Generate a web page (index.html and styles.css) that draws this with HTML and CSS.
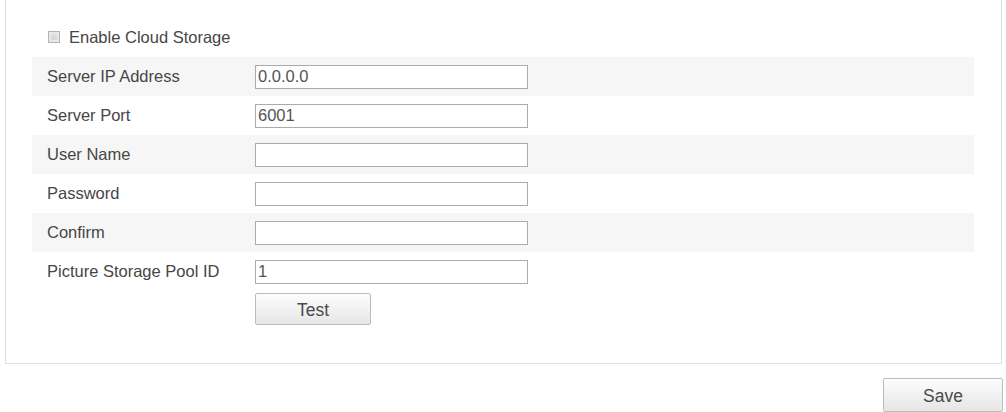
FILE: index.html
```html
<!DOCTYPE html>
<html lang="en">
<head>
    <meta charset="UTF-8">
    <title>Cloud Storage</title>
    <link rel="stylesheet" href="styles.css">
</head>
<body>
    <div class="panel">
        <label class="enable">
            <input type="checkbox" class="check">
            <span>Enable Cloud Storage</span>
        </label>

        <div class="form">
            <div class="row">
                <span class="label">Server IP Address</span>
                <input type="text" class="field" value="0.0.0.0">
            </div>
            <div class="row">
                <span class="label">Server Port</span>
                <input type="text" class="field" value="6001">
            </div>
            <div class="row">
                <span class="label">User Name</span>
                <input type="text" class="field" value="">
            </div>
            <div class="row">
                <span class="label">Password</span>
                <input type="password" class="field" value="">
            </div>
            <div class="row">
                <span class="label">Confirm</span>
                <input type="password" class="field" value="">
            </div>
            <div class="row">
                <span class="label">Picture Storage Pool ID</span>
                <input type="text" class="field" value="1">
            </div>
        </div>

        <div class="test-row">
            <button class="btn test-btn">Test</button>
        </div>
    </div>

    <div class="footer">
        <button class="btn save-btn">Save</button>
    </div>
</body>
</html>
```

FILE: styles.css
```css
body {
    margin: 0;
    background-color: #fff;
    font-family: "Liberation Sans", Arial, sans-serif;
    font-size: 16.5px;
    color: #464646;
}

.panel {
    margin: 0 4px 0 5px;
    border: 1px solid #e0e0e0;
    border-top: none;
    padding: 26px 0 38px;
}

.enable {
    display: flex;
    align-items: center;
    height: 22px;
    margin: 0 0 9px 42px;
}

.check {
    appearance: none;
    width: 12px;
    height: 12px;
    margin: 0 9px 0 0;
    border: 1px solid #b4b4b4;
    background: linear-gradient(#e4e4e4, #d2d2d2);
    box-shadow: inset 0 0 0 2px #e8e8e8;
}

.form {
    margin: 0 27px 0 26px;
}

.row {
    display: flex;
    align-items: center;
    height: 39px;
}

.row:nth-child(odd) {
    background-color: #f6f6f6;
}

.label {
    width: 208px;
    padding-left: 15px;
}

.field {
    box-sizing: border-box;
    width: 273px;
    height: 24px;
    padding: 0 2px;
    border: 1px solid #ababab;
    border-radius: 0;
    background-color: #fff;
    font-family: inherit;
    font-size: 16.5px;
    color: #555;
}

.test-row {
    padding: 2px 0 0 249px;
}

.btn {
    box-sizing: border-box;
    border: 1px solid #bcbcbc;
    border-radius: 2px;
    background: linear-gradient(#fdfdfd, #e6e6e6);
    font-family: inherit;
    font-size: 17.5px;
    color: #4a4a4a;
    padding-top: 3px;
    cursor: pointer;
}

.test-btn {
    width: 116px;
    height: 32px;
}

.footer {
    display: flex;
    justify-content: flex-end;
    padding: 14px 3px 0 0;
}

.save-btn {
    width: 120px;
    height: 34px;
}
```
